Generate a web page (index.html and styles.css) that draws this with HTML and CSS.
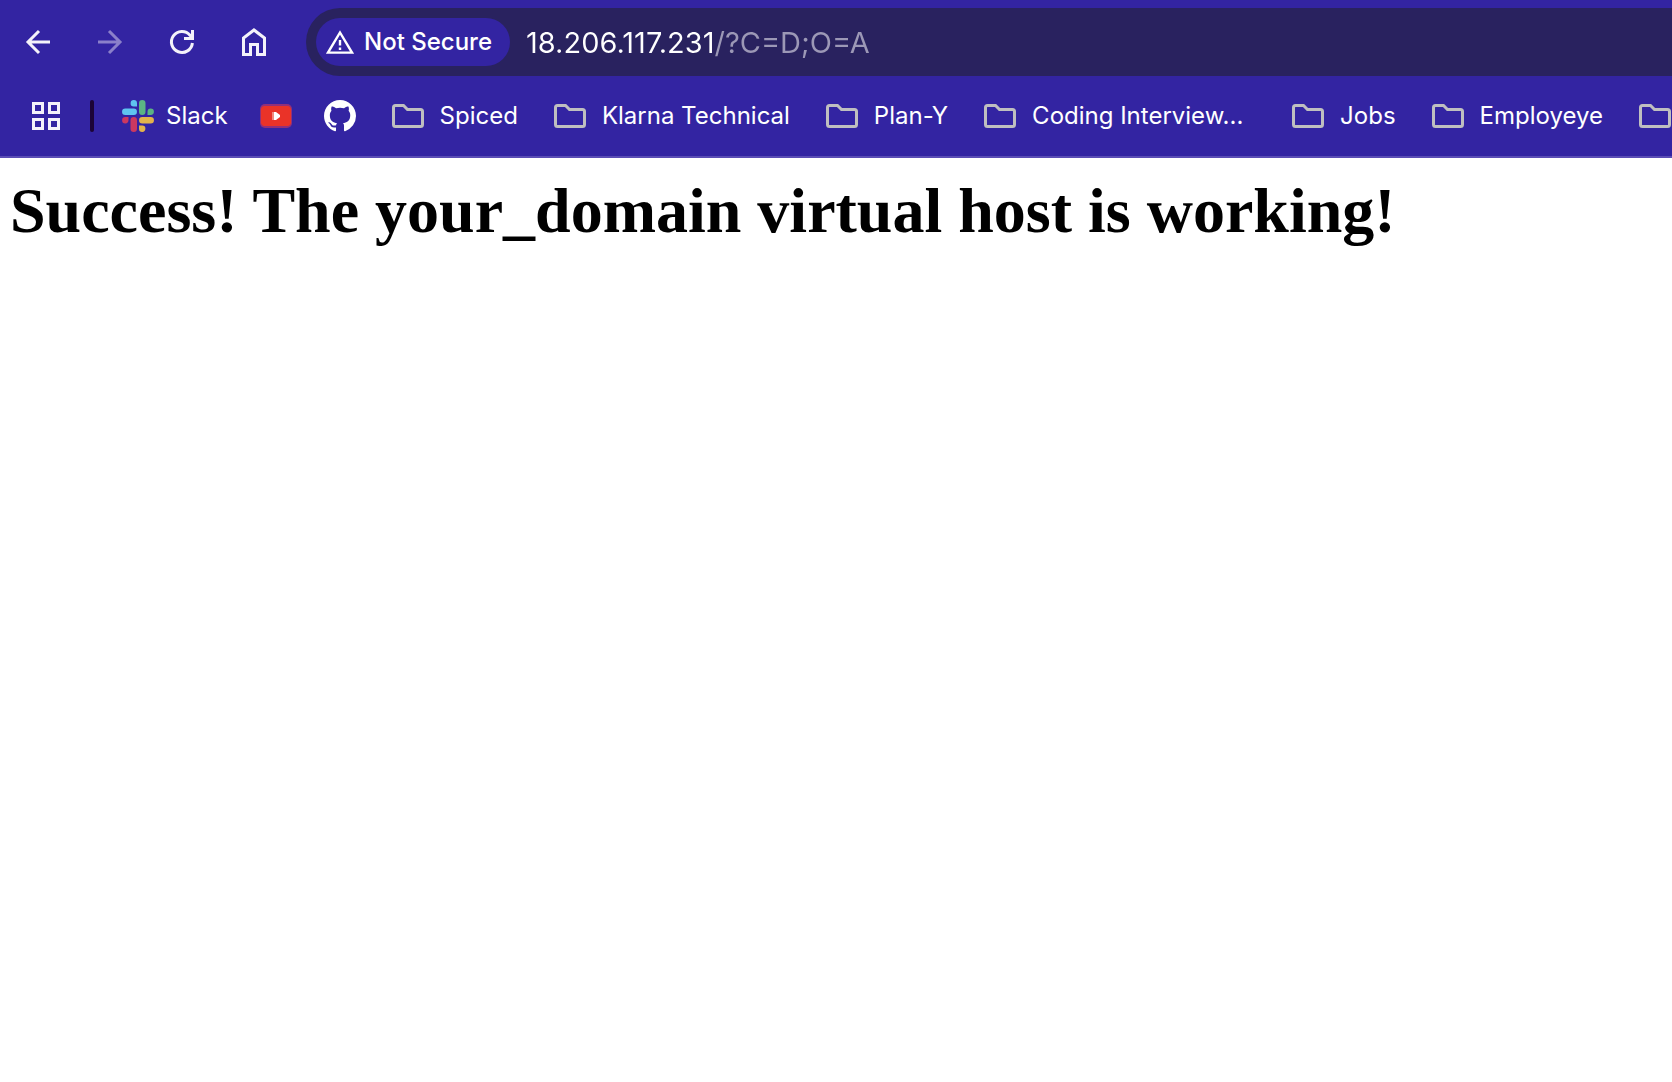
FILE: index.html
```html
<!DOCTYPE html>
<html lang="en">
<head>
<meta charset="utf-8">
<title>Welcome to your_domain!</title>
<link rel="stylesheet" href="styles.css">
</head>
<body>
<svg class="defs" aria-hidden="true">
  <symbol id="folder" viewBox="0 0 32 24">
    <path d="M3.500 1.500H11.500L15.500 5.500H28.500Q30.500 5.500 30.500 7.500V20.500Q30.500 22.500 28.500 22.500H3.500Q1.500 22.500 1.500 20.500V3.500Q1.500 1.500 3.500 1.500Z" fill="none" stroke="#bfbfc0" stroke-width="3"/>
  </symbol>
</svg>
<header class="chrome">
  <div class="toolbar">
    <nav class="nav" aria-label="Navigation">
      <button class="nav-button" type="button" aria-label="Back">
        <svg width="28" height="28" viewBox="0 0 28 28"><path d="M26 14H4M15 3L4 14L15 25" fill="none" stroke="#f4f2fa" stroke-width="3"/></svg>
      </button>
      <button class="nav-button" type="button" aria-label="Forward" disabled>
        <svg width="28" height="28" viewBox="0 0 28 28"><path d="M2 14H24M13 3L24 14L13 25" fill="none" stroke="#8b80ca" stroke-width="3"/></svg>
      </button>
      <button class="nav-button" type="button" aria-label="Reload">
        <svg width="28" height="28" viewBox="0 0 28 28"><path d="M24.400 15A10.500 10.500 0 1 1 22 7.200L24.500 10M24.500 2V10.500H16" fill="none" stroke="#f4f2fa" stroke-width="3"/></svg>
      </button>
      <button class="nav-button" type="button" aria-label="Home">
        <svg width="28" height="28" viewBox="0 0 28 28"><path d="M3.500 26.500V10L14 2L24.500 10V26.500H17.500V16.500H10.500V26.500Z" fill="none" stroke="#f4f2fa" stroke-width="3"/></svg>
      </button>
    </nav>
    <div class="omnibox">
      <button class="security" type="button">
        <svg width="28" height="24" viewBox="0 0 28 24"><path d="M14 2.500L26 22.600H2Z" fill="none" stroke="#fff" stroke-width="2.400"/><path d="M14 10V15.500M14 17.500V20" stroke="#fff" stroke-width="2.400"/></svg>
        <span>Not Secure</span>
      </button>
      <input class="url" type="text" aria-label="Address" spellcheck="false" value="18.206.117.231/?C=D;O=A">
    </div>
  </div>
  <nav class="bookmarks" aria-label="Bookmarks">
    <button class="apps" type="button" aria-label="Apps">
      <svg width="28" height="28" viewBox="0 0 28 28"><path d="M1.500 1.500H10.500V10.500H1.500ZM17.500 1.500H26.500V10.500H17.500ZM1.500 17.500H10.500V26.500H1.500ZM17.500 17.500H26.500V26.500H17.500Z" fill="none" stroke="#f4f2fa" stroke-width="3"/></svg>
    </button>
    <span class="divider"></span>
    <a class="site" href="#slack">
      <svg width="32" height="32" viewBox="0 0 32 32">
        <path d="M15 6.500H11.700A3.200 3.200 0 1 1 15 3.300ZM3.300 8.500H11.700A3.250 3.250 0 0 1 11.700 15H3.300A3.250 3.250 0 0 1 3.300 8.500Z" fill="#5fc4ef"/>
        <path d="M25.500 15V11.700A3.200 3.200 0 1 1 28.700 15ZM23.500 3.300V11.700A3.250 3.250 0 0 1 17 11.700V3.300A3.250 3.250 0 0 1 23.500 3.300Z" fill="#5bb384"/>
        <path d="M17 25.500H20.300A3.200 3.200 0 1 1 17 28.700ZM28.700 23.500H20.300A3.250 3.250 0 0 1 20.300 17H28.700A3.250 3.250 0 0 1 28.700 23.500Z" fill="#e3b34c"/>
        <path d="M6.500 17V20.300A3.200 3.200 0 1 1 3.300 17ZM8.500 28.700V20.300A3.250 3.250 0 0 1 15 20.300V28.700A3.250 3.250 0 0 1 8.500 28.700Z" fill="#cb3860"/>
      </svg>
      <span>Slack</span>
    </a>
    <a class="site" href="#youtube" aria-label="YouTube">
      <svg width="32" height="32" viewBox="0 0 32 32"><rect x="0" y="4" width="32" height="24" rx="5" fill="#92307a"/><rect x="2" y="6" width="28" height="20" rx="2" fill="#ea3328"/><rect x="1" y="7" width="30" height="18" rx="2" fill="#ea3328"/><path d="M12 12H16V20H12Z" fill="#f08a80"/><path d="M14 12H16L20 15V17L16 20H14Z" fill="#fff"/></svg>
    </a>
    <a class="site" href="#github" aria-label="GitHub">
      <svg width="32" height="32" viewBox="0 0 16 16"><path fill="#fff" d="M8 0C3.580 0 0 3.580 0 8c0 3.540 2.290 6.530 5.470 7.590.4.070.55-.17.55-.38 0-.19-.01-.82-.01-1.490-2.010.37-2.530-.49-2.690-.94-.09-.23-.48-.94-.82-1.130-.28-.15-.68-.52-.01-.53.63-.01 1.080.58 1.230.82.72 1.210 1.870.87 2.330.66.07-.52.28-.87.51-1.070-1.780-.2-3.640-.89-3.640-3.950 0-.87.31-1.590.82-2.150-.08-.2-.36-1.020.08-2.120 0 0 .67-.21 2.200.82.64-.18 1.320-.27 2-.27s1.360.09 2 .27c1.530-1.040 2.200-.82 2.200-.82.44 1.100.16 1.920.08 2.120.51.56.82 1.270.82 2.150 0 3.070-1.870 3.750-3.650 3.950.29.25.54.73.54 1.480 0 1.070-.01 1.930-.01 2.200 0 .21.15.46.55.38A8.010 8.010 0 0 0 16 8c0-4.420-3.580-8-8-8Z"/></svg>
    </a>
    <div class="folders">
      <button class="folder" type="button"><svg width="32" height="24"><use href="#folder"/></svg><span>Spiced</span></button>
      <button class="folder" type="button"><svg width="32" height="24"><use href="#folder"/></svg><span>Klarna Technical</span></button>
      <button class="folder" type="button"><svg width="32" height="24"><use href="#folder"/></svg><span>Plan-Y</span></button>
      <button class="folder folder-long" type="button"><svg width="32" height="24"><use href="#folder"/></svg><span>Coding Interview...</span></button>
      <button class="folder" type="button"><svg width="32" height="24"><use href="#folder"/></svg><span>Jobs</span></button>
      <button class="folder" type="button"><svg width="32" height="24"><use href="#folder"/></svg><span>Employeye</span></button>
      <button class="folder" type="button" aria-label="More bookmarks"><svg width="32" height="24"><use href="#folder"/></svg></button>
    </div>
  </nav>
</header>
<main class="page">
  <h1>Success! The your_domain virtual host is working!</h1>
</main>
</body>
</html>
```
FILE: styles.css
```css
* {
  box-sizing: border-box;
}

body {
  margin: 0;
  background: #fff;
  overflow-x: hidden;
}

button {
  margin: 0;
  padding: 0;
  border: 0;
  background: none;
  color: inherit;
  font: inherit;
}

svg {
  display: block;
  flex: none;
}

.defs {
  position: absolute;
  width: 0;
  height: 0;
}

.chrome {
  padding-top: 8px;
  border-bottom: 2px solid #5b4db5;
  background: #3324a2;
  color: #fff;
  font-family: Inter, "Liberation Sans", sans-serif;
  font-size: 24px;
  line-height: 32px;
}

.toolbar {
  display: flex;
  align-items: center;
  padding-left: 24px;
}

.nav {
  display: flex;
  gap: 44px;
  margin-right: 38px;
}

.omnibox {
  display: flex;
  flex: 1;
  align-items: center;
  gap: 16px;
  height: 68px;
  padding-left: 10px;
  border-radius: 34px 0 0 34px;
  background: #29225f;
}

.security {
  display: flex;
  flex: none;
  align-items: center;
  gap: 10px;
  height: 48px;
  padding: 0 18px 0 10px;
  border-radius: 24px;
  background: #3324a2;
  font-weight: 500;
}

/* The host is drawn bright and the path that follows it dimmed. */
.url {
  flex: 1;
  min-width: 0;
  height: 48px;
  padding: 0;
  border: 0;
  outline: 0;
  background: linear-gradient(to right, #fff 189px, #9c98b6 189px);
  background-clip: text;
  color: #fff;
  -webkit-text-fill-color: transparent;
  font-family: inherit;
  font-size: 29px;
}

.bookmarks {
  display: flex;
  align-items: center;
  height: 80px;
  padding-left: 32px;
  overflow: hidden;
  white-space: nowrap;
}

.divider {
  flex: none;
  width: 4px;
  height: 32px;
  margin: 0 28px 0 30px;
  border-radius: 2px;
  background: #1c0436;
}

.site {
  display: flex;
  flex: none;
  align-items: center;
  gap: 12px;
  margin-right: 32px;
  color: inherit;
  text-decoration: none;
}

.folders {
  display: flex;
  flex: none;
  gap: 36px;
  padding-left: 4px;
}

.folder {
  display: flex;
  flex: none;
  align-items: center;
  gap: 16px;
}

.folder-long {
  width: 272px;
}

.page {
  padding: 16px 10px;
}

h1 {
  margin: 0;
  color: #000;
  font-family: "Liberation Serif", serif;
  font-size: 64px;
  font-weight: 700;
  line-height: 74px;
}
```
